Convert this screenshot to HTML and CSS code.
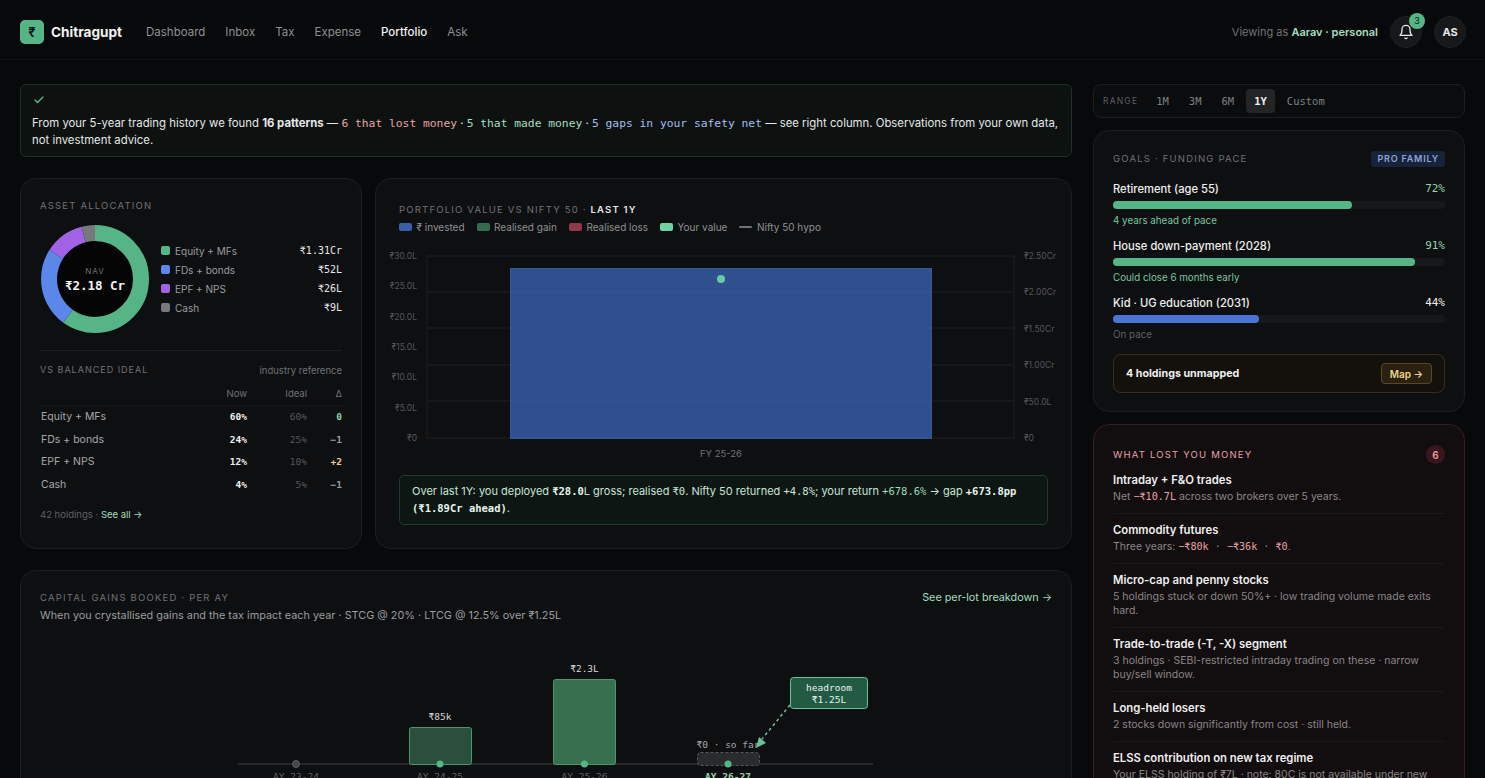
FILE: index.html
```html
<!DOCTYPE html>
<html lang="en">

<head>
    <meta charset="UTF-8">
    <meta name="viewport" content="width=device-width, initial-scale=1.0">
    <title>Chitragupt - Portfolio</title>
    <link rel="stylesheet" href="styles.css">
</head>

<body>
    <header class="topbar">
        <div class="brand">
            <span class="logo">₹</span>
            <span class="brand-name">Chitragupt</span>
        </div>
        <nav class="nav">
            <a>Dashboard</a>
            <a>Inbox</a>
            <a>Tax</a>
            <a>Expense</a>
            <a class="active">Portfolio</a>
            <a>Ask</a>
        </nav>
        <div class="top-right">
            <span class="viewing">Viewing as <b>Aarav · personal</b></span>
            <div class="round-btn bell">
                <svg width="16" height="16" viewBox="0 0 24 24" fill="none" stroke="#e8e8e8" stroke-width="2" stroke-linecap="round" stroke-linejoin="round">
                    <path d="M6 8a6 6 0 0 1 12 0c0 7 3 9 3 9H3s3-2 3-9" />
                    <path d="M10.3 21a1.94 1.94 0 0 0 3.4 0" />
                </svg>
                <span class="bell-badge">3</span>
            </div>
            <div class="round-btn avatar">AS</div>
        </div>
    </header>

    <main class="layout">
        <div class="main-col">
            <section class="banner">
                <svg class="banner-check" width="12" height="12" viewBox="0 0 24 24" fill="none" stroke="#5fbf8f" stroke-width="2.4" stroke-linecap="round" stroke-linejoin="round">
                    <polyline points="20 6 9 17 4 12" />
                </svg>
                <p>From your 5-year trading history we found <b>16 patterns</b> — <span class="mono red">6 that lost money</span> · <span class="mono green">5 that made money</span> · <span class="mono blue">5 gaps in your safety net</span> — see right column. Observations from your own data, not investment advice.</p>
            </section>

            <div class="row-two">
                <section class="card alloc">
                    <h4 class="eyebrow">Asset allocation</h4>
                    <div class="alloc-top">
                        <div class="donut">
                            <svg width="108" height="108" viewBox="0 0 108 108">
                                <circle cx="54" cy="54" r="38" fill="#050506" />
                                <g fill="none" stroke-width="16" transform="rotate(-90 54 54)">
                                    <circle cx="54" cy="54" r="46" pathLength="100" stroke="#55b586" stroke-dasharray="60 40" />
                                    <circle cx="54" cy="54" r="46" pathLength="100" stroke="#5b86ea" stroke-dasharray="24 76" stroke-dashoffset="-60" />
                                    <circle cx="54" cy="54" r="46" pathLength="100" stroke="#a262e6" stroke-dasharray="12 88" stroke-dashoffset="-84" />
                                    <circle cx="54" cy="54" r="46" pathLength="100" stroke="#77797c" stroke-dasharray="4 96" stroke-dashoffset="-96" />
                                </g>
                            </svg>
                            <div class="donut-label">
                                <span>NAV</span>
                                <b>₹2.18 Cr</b>
                            </div>
                        </div>
                        <ul class="alloc-legend">
                            <li><i class="sw sw-green"></i><span>Equity + MFs</span><b>₹1.31Cr</b></li>
                            <li><i class="sw sw-blue"></i><span>FDs + bonds</span><b>₹52L</b></li>
                            <li><i class="sw sw-purple"></i><span>EPF + NPS</span><b>₹26L</b></li>
                            <li><i class="sw sw-gray"></i><span>Cash</span><b>₹9L</b></li>
                        </ul>
                    </div>
                    <div class="ideal-head">
                        <h4 class="eyebrow">vs balanced ideal</h4>
                        <span>industry reference</span>
                    </div>
                    <table class="ideal-table">
                        <thead>
                            <tr><th></th><th>Now</th><th>Ideal</th><th>Δ</th></tr>
                        </thead>
                        <tbody>
                            <tr><td>Equity + MFs</td><td class="now">60%</td><td class="ideal">60%</td><td class="delta zero">0</td></tr>
                            <tr><td>FDs + bonds</td><td class="now">24%</td><td class="ideal">25%</td><td class="delta">−1</td></tr>
                            <tr><td>EPF + NPS</td><td class="now">12%</td><td class="ideal">10%</td><td class="delta over">+2</td></tr>
                            <tr><td>Cash</td><td class="now">4%</td><td class="ideal">5%</td><td class="delta">−1</td></tr>
                        </tbody>
                    </table>
                    <p class="alloc-foot">42 holdings · <a>See all →</a></p>
                </section>

                <section class="card value">
                    <h4 class="eyebrow">Portfolio value vs Nifty 50 · <b>Last 1Y</b></h4>
                    <ul class="value-legend">
                        <li><i class="key key-invest"></i>₹ invested</li>
                        <li><i class="key key-gain"></i>Realised gain</li>
                        <li><i class="key key-loss"></i>Realised loss</li>
                        <li><i class="key key-yours"></i>Your value</li>
                        <li><i class="key key-nifty"></i>Nifty 50 hypo</li>
                    </ul>
                    <svg class="value-chart" width="649" height="225" viewBox="399 240 649 225">
                        <g class="grid">
                            <line x1="427" y1="255" x2="1014" y2="255" />
                            <line x1="427" y1="291" x2="1014" y2="291" />
                            <line x1="427" y1="327" x2="1014" y2="327" />
                            <line x1="427" y1="364" x2="1014" y2="364" />
                            <line x1="427" y1="400" x2="1014" y2="400" />
                            <line x1="427" y1="437" x2="1014" y2="437" />
                            <line x1="427" y1="255" x2="427" y2="437" />
                            <line x1="1014" y1="255" x2="1014" y2="437" />
                        </g>
                        <rect class="invest-bar" x="510.5" y="267.5" width="421" height="170" />
                        <circle cx="721" cy="278" r="4" fill="#63cfa0" />
                        <g class="axis-l">
                            <text x="417" y="258">₹30.0L</text>
                            <text x="417" y="288">₹25.0L</text>
                            <text x="417" y="319">₹20.0L</text>
                            <text x="417" y="349">₹15.0L</text>
                            <text x="417" y="379">₹10.0L</text>
                            <text x="417" y="410">₹5.0L</text>
                            <text x="417" y="440">₹0</text>
                        </g>
                        <g class="axis-r">
                            <text x="1024" y="258">₹2.50Cr</text>
                            <text x="1024" y="294">₹2.00Cr</text>
                            <text x="1024" y="331">₹1.50Cr</text>
                            <text x="1024" y="367">₹1.00Cr</text>
                            <text x="1024" y="404">₹50.0L</text>
                            <text x="1024" y="440">₹0</text>
                        </g>
                        <text class="axis-x" x="721" y="456">FY 25-26</text>
                    </svg>
                    <p class="insight">Over last 1Y: you deployed <b class="mono">₹28.0</b>L gross; realised <span class="mono">₹0</span>. Nifty 50 returned <span class="mono">+4.8%</span>; your return <span class="mono soft-green">+678.6%</span> → gap <b class="mono">+673.8pp (₹1.89Cr ahead)</b>.</p>
                </section>
            </div>

            <section class="card gains">
                <div class="gains-head">
                    <div>
                        <h4 class="eyebrow">Capital gains booked · per AY</h4>
                        <p>When you crystallised gains and the tax impact each year · STCG @ 20% · LTCG @ 12.5% over ₹1.25L</p>
                    </div>
                    <a>See per-lot breakdown →</a>
                </div>
                <svg class="gains-chart" width="1012" height="150" viewBox="40 640 1012 150">
                    <line x1="238" y1="764" x2="873" y2="764" stroke="#2f3133" stroke-width="1.5" />
                    <rect x="409.5" y="727.5" width="62" height="37" rx="2" fill="#2a4f3d" stroke="#4f9472" />
                    <rect x="553.5" y="679.5" width="62" height="85" rx="2" fill="#36704f" stroke="#4f9472" />
                    <rect x="697.5" y="752.5" width="62" height="13" rx="3" fill="#2a2b2e" stroke="#55575a" stroke-dasharray="3 2" />
                    <circle cx="296" cy="764" r="3.5" fill="#444648" stroke="#5c5e60" />
                    <circle cx="440" cy="764" r="3.5" fill="#55b586" />
                    <circle cx="584.5" cy="764" r="3.5" fill="#55b586" />
                    <circle cx="728" cy="764" r="3.5" fill="#55b586" />
                    <text class="bar-label" x="440" y="720">₹85k</text>
                    <text class="bar-label" x="584.5" y="672">₹2.3L</text>
                    <text class="bar-label dim" x="728" y="748">₹0 · so far</text>
                    <text class="ay-label" x="296" y="780">AY 23-24</text>
                    <text class="ay-label" x="440" y="780">AY 24-25</text>
                    <text class="ay-label" x="584.5" y="780">AY 25-26</text>
                    <text class="ay-label now" x="728" y="780">AY 26-27</text>
                    <line x1="790" y1="705" x2="762" y2="739" stroke="#6ac39a" stroke-width="1.5" stroke-dasharray="3 3" />
                    <polygon points="756,748 759,737 766,743" fill="#6ac39a" />
                    <rect x="790.5" y="677.5" width="77" height="31" rx="3" fill="#235a44" stroke="#6ac39a" />
                    <text class="head-label" x="829" y="691">headroom</text>
                    <text class="head-label" x="829" y="703">₹1.25L</text>
                </svg>
            </section>
        </div>

        <aside class="side-col">
            <div class="range">
                <span class="range-label">RANGE</span>
                <a>1M</a>
                <a>3M</a>
                <a>6M</a>
                <a class="active">1Y</a>
                <a>Custom</a>
            </div>

            <section class="card goals">
                <div class="goals-head">
                    <h4 class="eyebrow">Goals · funding pace</h4>
                    <span class="pro">PRO FAMILY</span>
                </div>
                <div class="goal">
                    <div class="goal-line"><span>Retirement (age 55)</span><b class="pct-green">72%</b></div>
                    <div class="track"><div class="fill fill-green" style="width: 72%"></div></div>
                    <p class="note-green">4 years ahead of pace</p>
                </div>
                <div class="goal">
                    <div class="goal-line"><span>House down-payment (2028)</span><b class="pct-green">91%</b></div>
                    <div class="track"><div class="fill fill-green" style="width: 91%"></div></div>
                    <p class="note-green">Could close 6 months early</p>
                </div>
                <div class="goal">
                    <div class="goal-line"><span>Kid · UG education (2031)</span><b>44%</b></div>
                    <div class="track"><div class="fill fill-blue" style="width: 44%"></div></div>
                    <p class="note-gray">On pace</p>
                </div>
                <div class="unmapped">
                    <b>4 holdings unmapped</b>
                    <a class="map-btn">Map →</a>
                </div>
            </section>

            <section class="card lost">
                <div class="lost-head">
                    <h4 class="eyebrow">What lost you money</h4>
                    <span class="lost-count">6</span>
                </div>
                <div class="lost-item">
                    <h5>Intraday + F&amp;O trades</h5>
                    <p>Net <span class="mono red">−₹10.7L</span> across two brokers over 5 years.</p>
                </div>
                <div class="lost-item">
                    <h5>Commodity futures</h5>
                    <p>Three years: <span class="mono"><span class="red">−₹80k</span> · <span class="red">−₹36k</span> · <span class="red">₹0</span></span>.</p>
                </div>
                <div class="lost-item">
                    <h5>Micro-cap and penny stocks</h5>
                    <p>5 holdings stuck or down 50%+ · low trading volume made exits hard.</p>
                </div>
                <div class="lost-item">
                    <h5>Trade-to-trade (-T, -X) segment</h5>
                    <p>3 holdings · SEBI-restricted intraday trading on these · narrow buy/sell window.</p>
                </div>
                <div class="lost-item">
                    <h5>Long-held losers</h5>
                    <p>2 stocks down significantly from cost · still held.</p>
                </div>
                <div class="lost-item">
                    <h5>ELSS contribution on new tax regime</h5>
                    <p>Your ELSS holding of ₹7L · note: 80C is not available under new regime.</p>
                </div>
            </section>
        </aside>
    </main>
</body>

</html>
```

FILE: styles.css
```css
* {
    box-sizing: border-box;
}

html,
body {
    margin: 0;
    height: 100%;
    overflow: hidden;
}

body {
    background-color: #08090a;
    color: #e6e7e8;
    font-family: Inter, "Liberation Sans", sans-serif;
    font-size: 12px;
}

h4,
h5,
p,
ul {
    margin: 0;
    padding: 0;
}

ul {
    list-style: none;
}

.mono {
    font-family: "DejaVu Sans Mono", "Liberation Mono", monospace;
}

.red {
    color: #e8a2a6;
}

.green {
    color: #a5dfc0;
}

.blue {
    color: #a6bdf0;
}

.soft-green {
    color: #9fdcbc;
}

/* top bar */
.topbar {
    height: 60px;
    padding: 4px 19px 0 20px;
    display: flex;
    align-items: center;
    border-bottom: 1px solid #111214;
}

.brand {
    display: flex;
    align-items: center;
    gap: 7px;
}

.logo {
    width: 24px;
    height: 24px;
    border-radius: 5px;
    background-color: #55b586;
    color: #0a1a12;
    font-weight: 700;
    font-size: 13px;
    display: flex;
    align-items: center;
    justify-content: center;
}

.brand-name {
    font-size: 13.6px;
    font-weight: 700;
    color: #f2f3f3;
}

.nav {
    display: flex;
    gap: 20px;
    margin-left: 24px;
}

.nav a {
    font-size: 11.5px;
    color: #8e9193;
}

.nav a.active {
    color: #f2f3f3;
    font-weight: 500;
}

.top-right {
    margin-left: auto;
    display: flex;
    align-items: center;
    gap: 12px;
}

.viewing {
    font-size: 11px;
    color: #6f7275;
}

.viewing b {
    color: #a5dfc0;
    font-weight: 600;
}

.round-btn {
    width: 32px;
    height: 32px;
    border-radius: 50%;
    background-color: #17181a;
    border: 1px solid #1f2022;
    display: flex;
    align-items: center;
    justify-content: center;
    position: relative;
}

.avatar {
    font-size: 11px;
    font-weight: 700;
}

.bell-badge {
    position: absolute;
    top: -4px;
    right: -4px;
    width: 16px;
    height: 16px;
    border-radius: 50%;
    background-color: #55b586;
    color: #0a1a12;
    font-size: 9px;
    display: flex;
    align-items: center;
    justify-content: center;
}

/* page grid */
.layout {
    display: flex;
    gap: 21px;
    padding: 24px 20px 0;
}

.main-col {
    width: 1052px;
    flex-shrink: 0;
    display: flex;
    flex-direction: column;
    gap: 21px;
}

.side-col {
    width: 372px;
    flex-shrink: 0;
    display: flex;
    flex-direction: column;
    gap: 12px;
}

.card {
    background-color: #0e0f11;
    border: 1px solid #1c1e20;
    border-radius: 16px;
    padding: 19px;
}

.eyebrow {
    font-size: 9.5px;
    font-weight: 400;
    letter-spacing: 1.2px;
    text-transform: uppercase;
    color: #6f7275;
    line-height: 16px;
}

.eyebrow b {
    color: #e6e7e8;
    font-weight: 600;
}

/* banner */
.banner {
    height: 73px;
    padding: 9px 6px 0 11px;
    background-color: #0d1211;
    border: 1px solid #1b3229;
    border-radius: 6px;
}

.banner-check {
    display: block;
    margin: 0 0 9px 1px;
}

.banner p {
    font-size: 11.35px;
    line-height: 17px;
    color: #e6e7e8;
}

.banner .mono {
    font-size: 11.3px;
}

.banner b {
    font-weight: 700;
}

/* top row of cards */
.row-two {
    display: flex;
    gap: 13px;
    height: 371px;
}

.alloc {
    width: 342px;
    flex-shrink: 0;
}

.value {
    flex: 1;
    padding: 23px;
}

.alloc-top {
    display: flex;
    align-items: center;
    gap: 12px;
    margin-top: 11px;
    padding: 0 0 17px 1px;
    border-bottom: 1px solid #1c1e20;
}

.donut {
    position: relative;
    width: 108px;
    height: 108px;
    flex-shrink: 0;
}

.donut svg {
    display: block;
}

.donut-label {
    position: absolute;
    inset: 0;
    display: flex;
    flex-direction: column;
    align-items: center;
    justify-content: center;
    gap: 2px;
}

.donut-label span {
    font-size: 8px;
    letter-spacing: 1px;
    color: #6f7275;
}

.donut-label b {
    font-family: "DejaVu Sans Mono", monospace;
    font-size: 12.5px;
    color: #f2f3f3;
}

.alloc-legend {
    flex: 1;
    display: flex;
    flex-direction: column;
    gap: 4px;
}

.alloc-legend li {
    display: flex;
    align-items: center;
    height: 15px;
    font-size: 10px;
    color: #9a9d9f;
}

.alloc-legend b {
    margin-left: auto;
    font-family: "DejaVu Sans Mono", monospace;
    font-weight: 400;
    font-size: 10px;
    color: #e6e7e8;
}

.sw {
    width: 9px;
    height: 9px;
    border-radius: 2px;
    margin-right: 5px;
}

.sw-green {
    background-color: #55b586;
}

.sw-blue {
    background-color: #5b86ea;
}

.sw-purple {
    background-color: #a262e6;
}

.sw-gray {
    background-color: #77797c;
}

.ideal-head {
    display: flex;
    justify-content: space-between;
    align-items: center;
    margin-top: 11px;
}

.ideal-head .eyebrow {
    font-size: 9px;
    letter-spacing: 1px;
}

.ideal-head span {
    font-size: 9.5px;
    color: #6f7275;
}

.ideal-table {
    width: 100%;
    border-collapse: collapse;
    margin-top: 6px;
    font-size: 10.5px;
    color: #a5a8aa;
}

.ideal-table th {
    font-weight: 400;
    font-size: 9.5px;
    color: #6f7275;
    text-align: right;
    height: 21px;
    padding: 0 0 2px;
    border-bottom: 1px solid #17181a;
}

.ideal-table td {
    height: 22.7px;
    padding: 0 0 0 1px;
}

.ideal-table th:nth-child(2),
.ideal-table td:nth-child(2) {
    width: 50px;
}

.ideal-table th:nth-child(3),
.ideal-table td:nth-child(3) {
    width: 60px;
}

.ideal-table th:nth-child(4),
.ideal-table td:nth-child(4) {
    width: 35px;
}

.now,
.ideal,
.delta {
    text-align: right;
    font-family: "DejaVu Sans Mono", monospace;
    font-size: 9.5px;
}

.now {
    color: #eeefef;
    font-weight: 700;
}

.ideal {
    color: #55585b;
}

.delta {
    color: #9a9d9f;
    font-weight: 700;
}

.delta.zero {
    color: #8ed4ae;
}

.delta.over {
    color: #edc98c;
}

.alloc-foot {
    margin-top: 13px;
    font-size: 9.5px;
    color: #5e6164;
}

.alloc-foot a {
    color: #a5dfc0;
}

/* portfolio value card */
.value-legend {
    display: flex;
    gap: 12px;
    margin-top: 2px;
}

.value-legend li {
    display: flex;
    align-items: center;
    font-size: 10px;
    color: #8e9193;
    line-height: 14px;
}

.key {
    width: 13px;
    height: 8px;
    border-radius: 2px;
    margin-right: 4.5px;
}

.key-invest {
    background-color: #3a5ea8;
}

.key-gain {
    background-color: #356b50;
}

.key-loss {
    background-color: #8f3a48;
}

.key-yours {
    background-color: #6ed4a4;
}

.key-nifty {
    height: 2px;
    background-color: #6f7275;
}

.value-chart {
    display: block;
    margin-top: 7px;
    overflow: visible;
}

.grid line {
    stroke: #1e2022;
    stroke-width: 1;
}

.invest-bar {
    fill: #3a62b4;
    fill-opacity: 0.78;
    stroke: #35589c;
}

.axis-l text,
.axis-r text,
.axis-x {
    font-family: Inter, sans-serif;
    font-size: 8.5px;
    fill: #55585b;
}

.axis-l text {
    text-anchor: end;
}

.axis-x {
    font-size: 9.5px;
    fill: #6f7275;
    text-anchor: middle;
}

.insight {
    margin-top: 9px;
    padding: 7px 12px;
    height: 50px;
    background-color: #0e1614;
    border: 1px solid #1f3a30;
    border-radius: 5px;
    font-size: 11px;
    line-height: 17px;
    color: #c7e6d6;
}

.insight .mono {
    font-size: 10.5px;
}

.insight b {
    color: #e4f5ec;
}

/* capital gains card */
.gains {
    height: 400px;
}

.gains-head {
    display: flex;
    justify-content: space-between;
    align-items: flex-start;
}

.gains-head p {
    margin-top: 2px;
    font-size: 10.85px;
    line-height: 15px;
    color: #9a9d9f;
}

.gains-head a {
    font-size: 10.8px;
    line-height: 16px;
    color: #a5dfc0;
}

.gains-chart {
    display: block;
    margin-top: 17px;
    overflow: hidden;
}

.bar-label,
.ay-label,
.head-label {
    font-family: "DejaVu Sans Mono", monospace;
    font-size: 9.5px;
    text-anchor: middle;
    fill: #d8dadb;
}

.bar-label.dim {
    fill: #a5a8aa;
}

.ay-label {
    fill: #5e6164;
}

.ay-label.now {
    fill: #8ed4ae;
}

.head-label {
    fill: #e4f5ec;
}

/* range picker */
.range {
    height: 34px;
    display: flex;
    align-items: center;
    padding: 0 9px;
    gap: 4px;
    border: 1px solid #1c1e20;
    border-radius: 8px;
    background-color: #0b0c0d;
    font-family: "DejaVu Sans Mono", monospace;
    font-size: 10.5px;
    color: #7d8083;
}

.range-label {
    font-family: Inter, sans-serif;
    font-size: 8.5px;
    letter-spacing: 1.2px;
    color: #5e6164;
    margin-right: 6px;
}

.range a {
    height: 24px;
    padding: 0 8px;
    display: flex;
    align-items: center;
    border-radius: 4px;
}

.range a.active {
    background-color: #232426;
    color: #f2f3f3;
    font-weight: 700;
}

/* goals */
.goals {
    height: 282px;
    padding: 20px 19px 0;
}

.goals-head {
    display: flex;
    justify-content: space-between;
    align-items: center;
    margin-bottom: 14px;
}

.pro {
    background-color: #16233a;
    color: #8ea6d8;
    font-size: 9px;
    font-weight: 600;
    letter-spacing: 0.8px;
    padding: 2px 6px;
    border-radius: 3px;
    line-height: 12px;
}

.goal {
    margin-bottom: 10px;
}

.goal-line {
    display: flex;
    justify-content: space-between;
    font-size: 11.2px;
    font-weight: 500;
    line-height: 16px;
    color: #eeefef;
}

.goal-line b {
    font-family: "DejaVu Sans Mono", monospace;
    font-weight: 400;
    font-size: 11px;
}

.pct-green {
    color: #8ed4ae;
}

.track {
    height: 8px;
    margin-top: 4px;
    border-radius: 4px;
    background-color: #17181a;
}

.fill {
    height: 100%;
    border-radius: 4px;
}

.fill-green {
    background-color: #55b586;
}

.fill-blue {
    background-color: #4a74d8;
}

.goal p {
    margin-top: 5px;
    font-size: 9.8px;
    line-height: 14px;
}

.note-green {
    color: #7cc5a0;
}

.note-gray {
    color: #5e6164;
}

.unmapped {
    margin-top: 12px;
    height: 39px;
    padding: 0 12px;
    display: flex;
    align-items: center;
    justify-content: space-between;
    background-color: #14110d;
    border: 1px solid #3b2f1c;
    border-radius: 8px;
    font-size: 10.7px;
}

.unmapped b {
    font-weight: 700;
    color: #eeefef;
}

.map-btn {
    width: 51px;
    height: 21px;
    display: flex;
    align-items: center;
    justify-content: center;
    border: 1px solid #5a4725;
    border-radius: 4px;
    background-color: #2a2110;
    color: #f0d48c;
    font-weight: 600;
    font-size: 10px;
}

/* lost money */
.lost {
    background-color: #120d0f;
    border-color: #3a1c20;
    padding: 20px 19px 0;
    height: 500px;
}

.lost .eyebrow {
    color: #e8a2a6;
}

.lost-head {
    display: flex;
    justify-content: space-between;
    align-items: center;
    margin-bottom: 8px;
}

.lost-count {
    width: 19px;
    height: 19px;
    border-radius: 50%;
    background-color: #3a161c;
    color: #e8a2a6;
    font-size: 10px;
    font-weight: 600;
    display: flex;
    align-items: center;
    justify-content: center;
}

.lost-item {
    padding-bottom: 9px;
    margin-bottom: 8px;
    border-bottom: 1px solid #1e1719;
}

.lost-item h5 {
    font-size: 11.3px;
    font-weight: 600;
    line-height: 17px;
    color: #eeefef;
}

.lost-item p {
    margin-top: 1px;
    font-size: 10.5px;
    line-height: 14px;
    color: #8a8688;
}

.lost-item .mono {
    font-size: 10.1px;
}
```
